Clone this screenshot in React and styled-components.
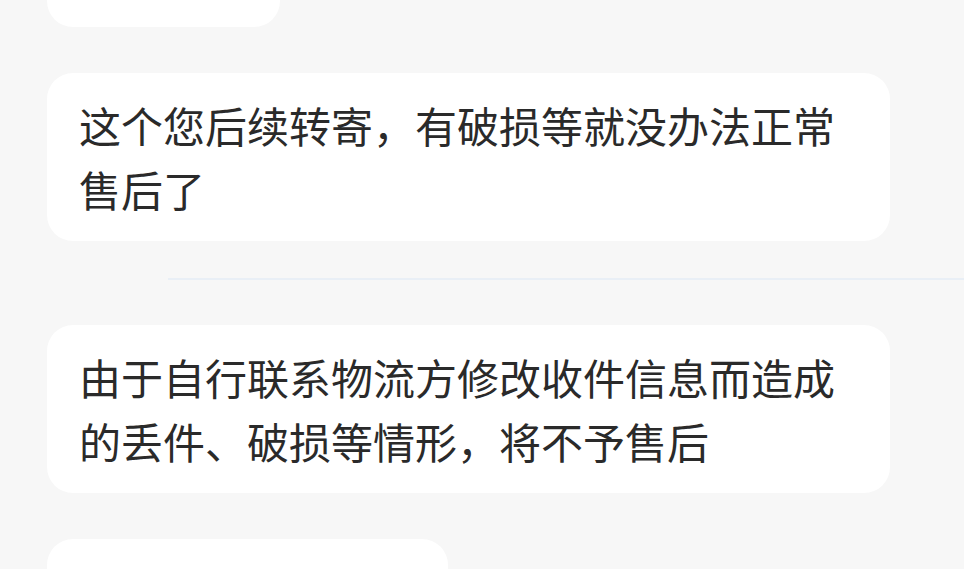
import React from 'react';
import styled, { createGlobalStyle } from 'styled-components';

const GlobalStyle = createGlobalStyle`
  html, body {
    margin: 0;
    padding: 0;
    background: #f7f7f7;
    overflow: hidden;
  }
  body {
    font-family: "Noto Sans CJK SC", "Noto Sans", sans-serif;
  }
`;

const messages = [
  { id: 1, text: '好的亲亲' },
  { id: 2, text: '这个您后续转寄，有破损等就没办法正常售后了' },
  { id: 'divider' },
  { id: 3, text: '由于自行联系物流方修改收件信息而造成的丢件、破损等情形，将不予售后' },
  { id: 4, text: '还有什么可以帮您' },
];

const App = () => {
  return (
    <>
      <GlobalStyle />
      <ChatList>
        {messages.map((msg) =>
          msg.id === 'divider' ? (
            <Divider key={msg.id} />
          ) : (
            <Bubble key={msg.id}>{msg.text}</Bubble>
          )
        )}
      </ChatList>
    </>
  );
};

export default App;

const ChatList = styled.div`
  display: flex;
  flex-direction: column;
  align-items: flex-start;
  gap: 46px;
  margin-top: -77px;
  padding-left: 47px;
`;

const Bubble = styled.div`
  box-sizing: border-box;
  flex-shrink: 0;
  max-width: 843px;
  padding: 20px 33px 20px 32px;
  background: #ffffff;
  border-radius: 26px;
  color: #2a2a2a;
  font-size: 42px;
  line-height: 64px;
`;

const Divider = styled.div`
  flex-shrink: 0;
  align-self: stretch;
  height: 2px;
  margin: -9px 0 -1px 121px;
  background: #e9eff6;
`;
